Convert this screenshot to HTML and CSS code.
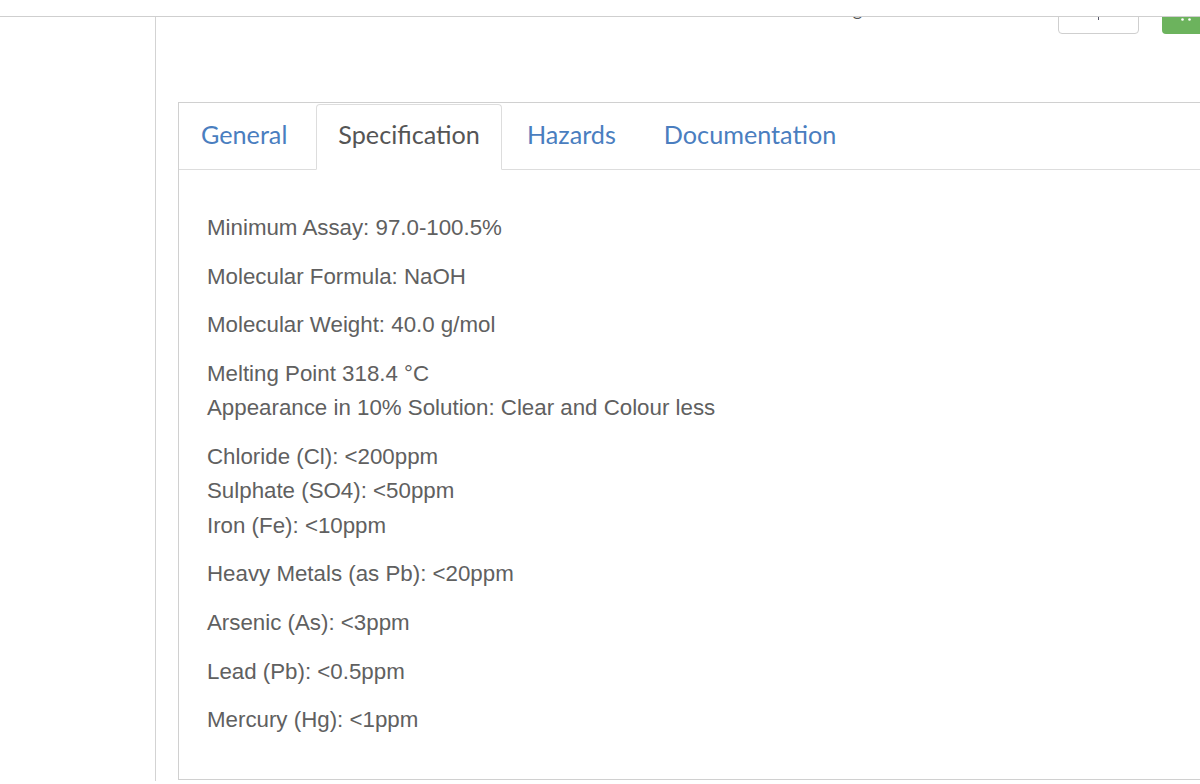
FILE: index.html
```html
<!DOCTYPE html>
<html lang="en">
<head>
    <meta charset="UTF-8">
    <title>Sodium Hydroxide - Specification</title>
    <link rel="stylesheet" href="styles.css">
</head>
<body>
    <div class="topbar"></div>
    <div class="layout">
        <aside class="sidebar"></aside>
        <main class="main">
            <!-- toolbar is scrolled mostly out of view, only its bottom edge shows -->
            <div class="toolbar">
                <span class="crumb">Catalog</span>
                <span class="btn btn-outline"><span class="tick"></span></span>
                <span class="btn btn-green">
                    <svg width="10" height="3" viewBox="0 0 10 3"><circle cx="1.5" cy="1.5" r="1.3" fill="#fff"/><circle cx="8.5" cy="1.5" r="1.3" fill="#fff"/></svg>
                </span>
            </div>

            <div class="panel">
                <ul class="tabs">
                    <li><a href="#">General</a></li>
                    <li class="active"><a href="#">Specification</a></li>
                    <li><a href="#">Hazards</a></li>
                    <li><a href="#">Documentation</a></li>
                </ul>
                <div class="tab-body">
                    <p>Minimum Assay: 97.0-100.5%</p>
                    <p>Molecular Formula: NaOH</p>
                    <p>Molecular Weight: 40.0 g/mol</p>
                    <p>Melting Point 318.4 °C<br>Appearance in 10% Solution: Clear and Colour less</p>
                    <p>Chloride (Cl): &lt;200ppm<br>Sulphate (SO4): &lt;50ppm<br>Iron (Fe): &lt;10ppm</p>
                    <p>Heavy Metals (as Pb): &lt;20ppm</p>
                    <p>Arsenic (As): &lt;3ppm</p>
                    <p>Lead (Pb): &lt;0.5ppm</p>
                    <p>Mercury (Hg): &lt;1ppm</p>
                </div>
            </div>
        </main>
    </div>
</body>
</html>
```

FILE: styles.css
```css
*{
    margin: 0;
    padding: 0;
    box-sizing: border-box;
}

body{
    background: #fff;
    font-family: "Liberation Sans", Arial, sans-serif;
    color: #606060;
}

.topbar{
    height: 17px;
    border-bottom: 1px solid #cfcfcf;
}

.layout{
    display: flex;
    height: 764px;
}

.sidebar{
    width: 156px;
    flex-shrink: 0;
    border-right: 1px solid #d3d3d3;
}

/* clips the toolbar above and the panel on the right */
.main{
    flex: 1;
    overflow: hidden;
    padding-left: 22px;
}

.toolbar{
    display: flex;
    align-items: flex-end;
    height: 40px;
    margin-top: -23px;
}

.crumb{
    margin-left: 624px;
    margin-bottom: 16.5px;
    font-family: Lato, sans-serif;
    font-size: 18px;
    line-height: 18px;
    color: #555;
}

.btn{
    display: flex;
    flex-shrink: 0;
    height: 36px;
    border-radius: 4px;
}

.btn-outline{
    width: 81px;
    margin-left: auto;
    border: 1px solid #cfcfcf;
    justify-content: center;
    align-items: flex-end;
    padding-bottom: 13.5px;
}

.tick{
    width: 1.5px;
    height: 3px;
    background: #556;
}

.btn-green{
    width: 48px;
    margin-left: 23px;
    margin-right: -10px;
    background: #6cb35d;
    align-items: flex-end;
    padding: 0 0 13.5px 19px;
}

.panel{
    width: 1100px;
    margin-top: 68px;
    border: 1px solid #d0d0d0;
}

.tabs{
    display: flex;
    list-style: none;
    padding-top: 1px;
    border-bottom: 1px solid #dddddd;
}

.tabs li{
    margin-right: 2px;
    margin-bottom: -1px;
}

.tabs a{
    display: block;
    padding: 13px 22px 19px;
    font-family: Lato, sans-serif;
    font-size: 25.2px;
    line-height: 32px;
    color: #4a7ebf;
    text-decoration: none;
    border: 1px solid transparent;
    border-radius: 4px 4px 0 0;
}

.tabs li:first-child a{
    padding-left: 21px;
    padding-right: 26px;
}

.tabs .active a{
    padding: 13px 21px 19px;
    color: #555;
    background: #fff;
    border-color: #dddddd;
    border-bottom-color: #fff;
}

.tab-body{
    padding: 41px 28px;
    font-size: 22.3px;
    line-height: 34.3px;
}

.tab-body p{
    margin-bottom: 14.4px;
}

.tab-body p:last-child{
    margin-bottom: 0;
}
```
